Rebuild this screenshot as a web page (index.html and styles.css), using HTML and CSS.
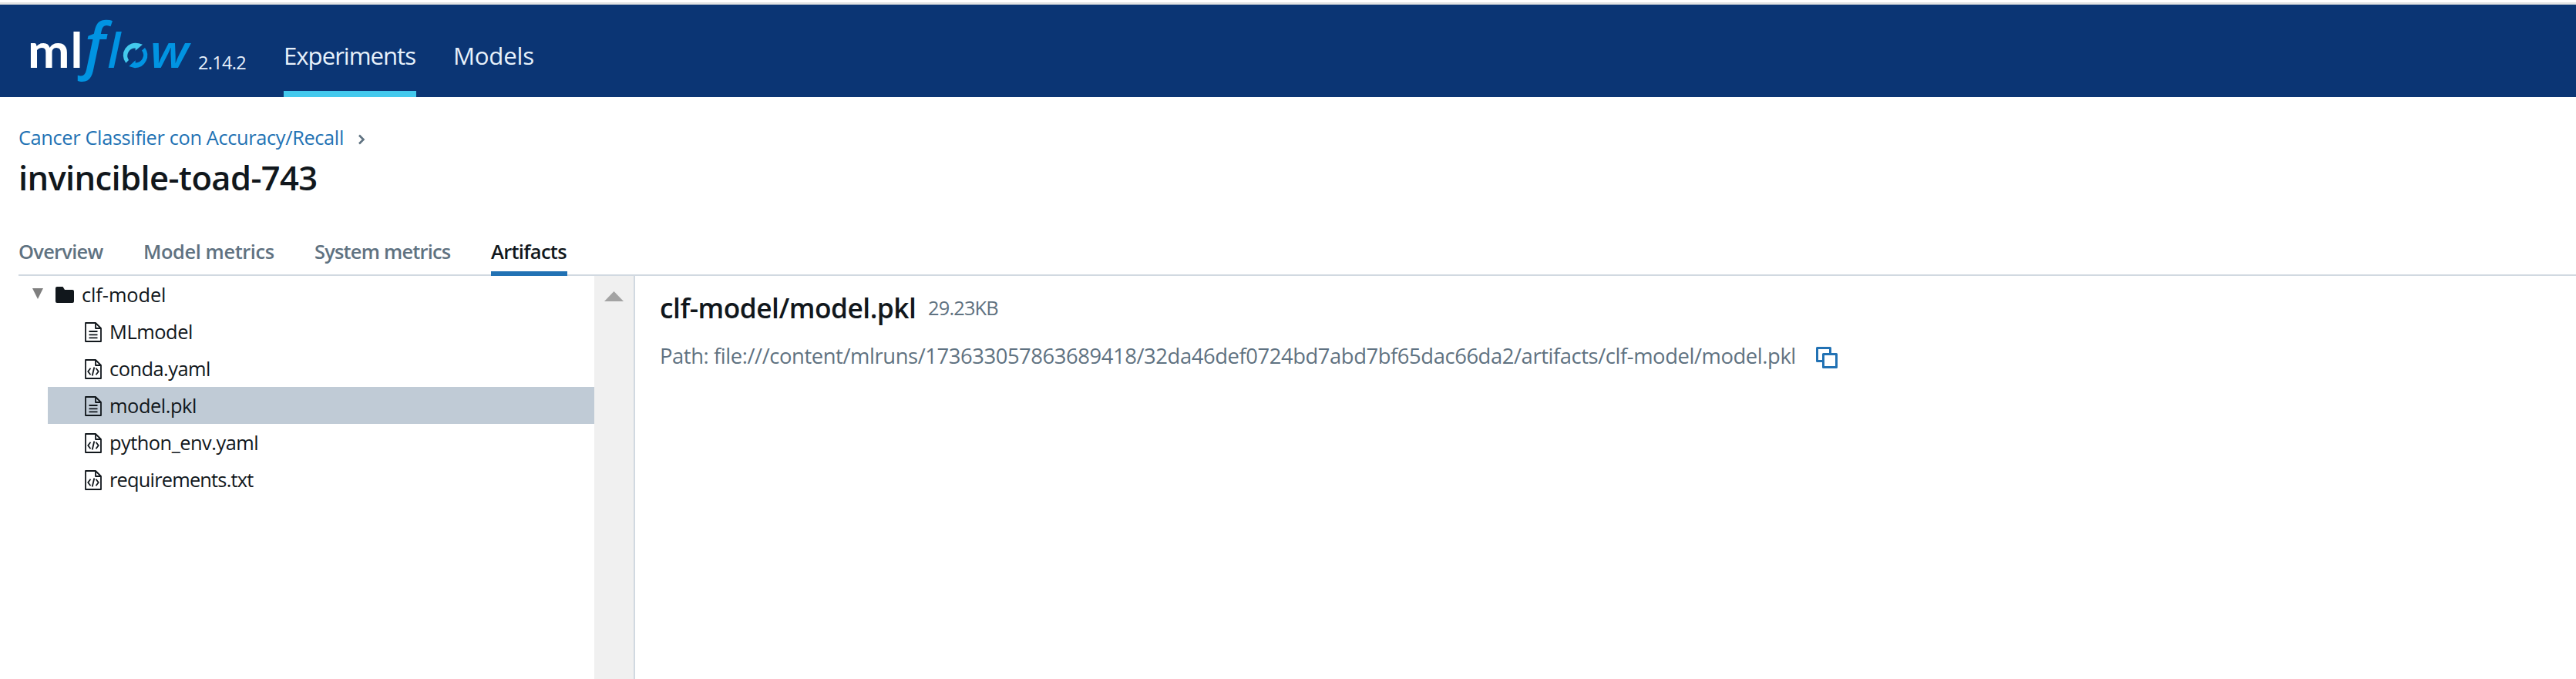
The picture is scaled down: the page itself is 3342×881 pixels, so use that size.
FILE: index.html
```
<!DOCTYPE html>
<html lang="en">
<head>
<meta charset="utf-8">
<title>invincible-toad-743 - MLflow</title>
<link rel="stylesheet" href="styles.css">
</head>
<body>
<svg class="defs" width="0" height="0">
  <symbol id="file" viewBox="0 0 24 28">
    <path d="M2 2h13l7 7v17H2z M15 2v7h7" />
    <path d="M6.500 13h11M6.500 17.300h11M6.500 21.300h11" />
  </symbol>
  <symbol id="code" viewBox="0 0 24 28">
    <path d="M2 2h13l7 7v17H2z M15 2v7h7" />
    <path d="M8.500 12.800l-3.300 4.200 3.300 4.200M15.500 12.800l3.300 4.200-3.300 4.200M13.300 11.500l-2.600 11" />
  </symbol>
</svg>
<header class="header">
  <svg class="logo" width="250" height="120" viewBox="0 6 250 120" role="img" aria-label="mlflow">
    <text class="logo-ml" transform="translate(36 88.300) scale(1.05 1)" font-size="62">m</text>
    <text class="logo-ml" x="91.600" y="88.300" font-size="64">l</text>
    <text class="logo-flow" x="109.600" y="87" font-size="79">f</text>
    <text class="logo-flow" x="139.200" y="88.300" font-size="62">l</text>
    <path fill="#43c9ed" d="M163.300 81.700A16 16 0 0 1 180 56.300L185 57.700L175.700 65.700V62.500A10 10 0 0 0 167 78z"/>
    <path fill="#0194e2" d="M188 62A16.500 16.500 0 0 1 175 88.300L167.300 86L175.700 78.300V81.500A10 10 0 0 0 184 65.500z"/>
    <text class="logo-flow" transform="translate(194.500 88.300) scale(1.12 1)" font-size="60">w</text>
  </svg>
  <span class="version">2.14.2</span>
  <nav class="nav">
    <a class="nav-link nav-active">Experiments</a>
    <a class="nav-link nav-models">Models</a>
  </nav>
</header>
<main>
  <div class="crumbs">
    <a>Cancer Classifier con Accuracy/Recall</a>
    <svg width="10" height="14" viewBox="0 0 10 14"><path d="M2 1.500l5.500 5.500-5.500 5.500"/></svg>
  </div>
  <h1 class="title">invincible-toad-743</h1>
  <div class="tabs">
    <a class="t-over">Overview</a>
    <a class="t-model">Model metrics</a>
    <a class="t-sys">System metrics</a>
    <a class="t-art">Artifacts</a>
  </div>
  <div class="content">
    <div class="tree">
      <div class="root">
        <svg class="caret" width="14" height="14" viewBox="0 0 14 14"><path d="M0 0h14L7 14z"/></svg>
        <svg class="folder" width="24" height="21" viewBox="0 0 24 21"><path d="M2 0h7.500L12 4h10a2 2 0 0 1 2 2v13a2 2 0 0 1-2 2H2a2 2 0 0 1-2-2V2a2 2 0 0 1 2-2z"/></svg>
        <span>clf-model</span>
      </div>
      <div class="file"><svg><use href="#file"/></svg><span class="ls-a">MLmodel</span></div>
      <div class="file"><svg><use href="#code"/></svg><span class="ls-b">conda.yaml</span></div>
      <div class="file selected"><svg><use href="#file"/></svg><span class="ls-a">model.pkl</span></div>
      <div class="file"><svg><use href="#code"/></svg><span class="ls-b">python_env.yaml</span></div>
      <div class="file"><svg><use href="#code"/></svg><span class="ls-c">requirements.txt</span></div>
    </div>
    <div class="scrollbar"><svg width="25" height="13" viewBox="0 0 25 13"><path d="M12.500 0L25 13H0z"/></svg></div>
    <section class="detail">
      <div class="detail-head"><h2>clf-model/model.pkl</h2><span class="size">29.23KB</span></div>
      <div class="path">
        <span>Path: file:///content/mlruns/173633057863689418/32da46def0724bd7abd7bf65dac66da2/artifacts/clf-model/model.pkl</span>
        <svg width="28" height="28" viewBox="0 0 28 28"><path d="M8 18.500H1.500v-17h17V8M9.500 9.500h17v17h-17z"/></svg>
      </div>
    </section>
  </div>
</main>
</body>
</html>
```
FILE: styles.css
```
* { box-sizing: border-box; }
body {
  margin: 0;
  padding-top: 3px;
  height: 881px;
  overflow: hidden;
  background: #fff;
  color: #11171c;
  font: 25.4px/40px "Open Sans", "Noto Sans", sans-serif;
  white-space: nowrap;
}
.defs { display: block; }
svg { flex: none; display: block; }
h1, h2 { margin: 0; font-weight: 600; }

.header {
  display: flex;
  height: 123px;
  border-top: 3px solid #e4e4e4;
  background: #0b3574;
  color: #e7f1fb;
}
.logo { overflow: visible; }
.logo-ml { font-family: Lato, sans-serif; font-weight: 700; fill: #fff; }
.logo-flow { font-family: "Open Sans", sans-serif; font-weight: 600; font-style: italic; fill: #0194e2; }
.version {
  width: 118px;
  padding: 60px 0 0 7px;
  font-size: 23.5px;
  line-height: 30px;
  letter-spacing: -0.68px;
}
.nav { display: flex; gap: 48px; }
.nav-link {
  height: 120px;
  padding-top: 43px;
  font-size: 31.2px;
  line-height: 46px;
  letter-spacing: -1.03px;
}
.nav-active { width: 172px; border-bottom: 8px solid #43c9ed; }
.nav-models { letter-spacing: -0.22px; }

main { padding: 32px 0 0 24px; }
.crumbs {
  display: flex;
  align-items: center;
  gap: 18px;
  color: #2272b4;
  letter-spacing: -0.37px;
}
.crumbs svg { margin-top: 5px; fill: none; stroke: #5f7281; stroke-width: 2.6; }
.title {
  margin: 5px 0 47px;
  font-size: 43.5px;
  line-height: 56px;
  letter-spacing: -0.63px;
}
.tabs {
  display: grid;
  grid-template-columns: 162px 222px 229px 99px;
  height: 52px;
  border-bottom: 2px solid #d1d9e1;
  color: #5f7281;
  font-weight: 600;
}
.tabs a { height: 52px; }
.t-over { letter-spacing: -0.71px; }
.t-model { letter-spacing: -0.4px; }
.t-sys { letter-spacing: -0.78px; }
.tabs .t-art { letter-spacing: -0.65px; color: #11171c; border-bottom: 6px solid #2272b4; }

.content { display: flex; height: 523px; }
.tree { width: 747px; }
.root { display: flex; align-items: center; height: 48px; padding-left: 18px; letter-spacing: -0.1px; }
.caret { margin: -2px 16px 0 0; fill: #7f7f7f; }
.folder { margin-right: 10px; fill: #11171c; }
.file {
  display: flex;
  align-items: center;
  gap: 9px;
  height: 48px;
  margin-left: 38px;
  padding-left: 47px;
}
.file svg { width: 24px; height: 28px; margin-top: 1px; fill: none; stroke: #11171c; stroke-width: 1.8; stroke-linejoin: round; }
.selected { background: #c0cbd6; }
.ls-a { letter-spacing: -0.45px; }
.ls-b { letter-spacing: -0.51px; }
.ls-c { letter-spacing: -0.8px; }
.scrollbar { width: 51px; padding: 20px 0 0 13px; background: #f0f0f0; }
.scrollbar path { fill: #a3a3a3; }
.detail { flex: 1; padding: 17px 0 0 32px; border-left: 2px solid #d1d9e1; color: #5f7281; }
.detail-head { display: flex; align-items: center; height: 48px; }
h2 { width: 348px; color: #11171c; font-size: 35.3px; line-height: 48px; letter-spacing: -0.49px; }
.size { letter-spacing: -0.83px; }
.path {
  display: flex;
  align-items: center;
  margin-top: 19px;
  font-size: 27.4px;
  letter-spacing: -0.427px;
}
.path span { width: 1500px; }
.path svg { margin-top: 4px; fill: none; stroke: #2272b4; stroke-width: 3; stroke-linejoin: round; }
```
